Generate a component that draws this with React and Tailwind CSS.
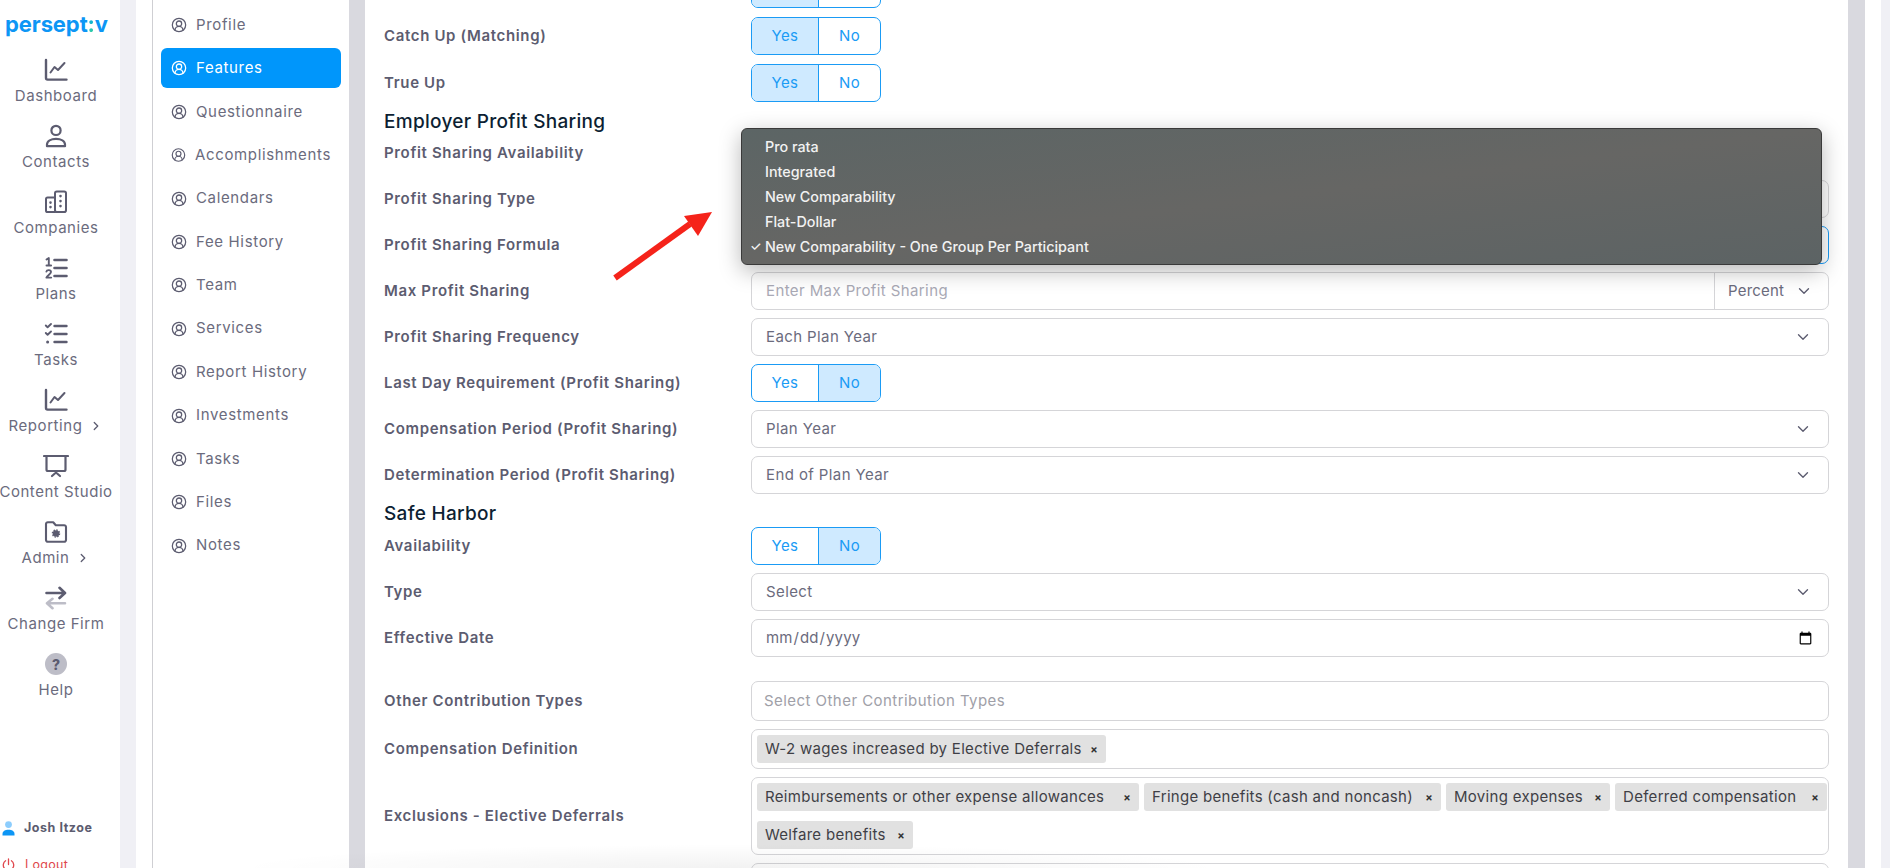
import React from "react";
import { ChevronDown, ChevronRight, CircleUserRound } from "lucide-react";

const DashIcon = () => (
  <svg width="24" height="24" viewBox="0 0 24 24" fill="none" stroke="currentColor" strokeWidth="2.4" strokeLinecap="round" strokeLinejoin="round">
    <path d="M2 2v18a1.6 1.6 0 0 0 1.6 1.6H22.5" />
    <path d="M6.5 14.5l4-5.5 3.5 3 6.5-7" strokeWidth="2" />
  </svg>
);

const ContactIcon = () => (
  <svg width="24" height="24" viewBox="0 0 24 24" fill="none" stroke="currentColor" strokeWidth="2.2" strokeLinejoin="round">
    <circle cx="12" cy="6.4" r="4.6" />
    <path d="M3 22.2v-1.6c0-3.6 4-5.8 9-5.8s9 2.2 9 5.8v1.6z" />
  </svg>
);

const CompanyIcon = () => (
  <svg width="24" height="24" viewBox="0 0 24 24" fill="none" stroke="currentColor" strokeWidth="2" strokeLinecap="round" strokeLinejoin="round">
    <path d="M11 7.5H3.6A1.6 1.6 0 0 0 2 9.1v11.3A1.6 1.6 0 0 0 3.6 22H11" />
    <rect x="11" y="1.5" width="11" height="20.5" rx="1.8" />
    <path d="M16.5 6v.1M16.5 11v.1M16.5 16v.1M6.5 12.5v.1M6.5 17v.1" strokeWidth="2.6" />
  </svg>
);

const PlansIcon = () => (
  <svg width="24" height="24" viewBox="0 0 24 24" fill="none" stroke="currentColor" strokeWidth="2.6" strokeLinecap="round" strokeLinejoin="round">
    <path d="M10.5 4h12M10.5 12h12M10.5 20h12" />
    <path d="M2.5 3.5L4.8 2v7.5M2.5 9.5h4.6" strokeWidth="1.9" />
    <path d="M2.4 15.6c.4-2 4.6-2 4.6.4 0 2-3.4 3-4.6 5.6h4.8" strokeWidth="1.9" />
  </svg>
);

const TasksIcon = () => (
  <svg width="24" height="24" viewBox="0 0 24 24" fill="none" stroke="currentColor" strokeWidth="2.4" strokeLinecap="round" strokeLinejoin="round">
    <path d="M10.5 4h12M10.5 12h12M10.5 20h12" />
    <path d="M1.8 3.5l1.8 1.8L7 2M1.8 11l1.8 1.8L7 9.5" strokeWidth="1.9" />
    <path d="M3.6 20v.1" strokeWidth="3" />
  </svg>
);

const StudioIcon = () => (
  <svg width="26" height="24" viewBox="0 0 26 24" fill="none" stroke="currentColor" strokeWidth="2.2" strokeLinecap="round" strokeLinejoin="round">
    <path d="M1 2h24" />
    <path d="M3.5 3v12.5a1.5 1.5 0 0 0 1.5 1.5h16a1.5 1.5 0 0 0 1.5-1.5V3" />
    <path d="M13 17v1.5M13 18.5l-4 3.5M13 18.5l4 3.5" />
  </svg>
);

const AdminIcon = () => (
  <svg width="24" height="24" viewBox="0 0 24 24" fill="none" stroke="currentColor" strokeWidth="2.1" strokeLinejoin="round">
    <path d="M2 4a1.8 1.8 0 0 1 1.8-1.8h5.4l2.6 3h8.4A1.8 1.8 0 0 1 22 7v13a1.8 1.8 0 0 1-1.8 1.8H3.8A1.8 1.8 0 0 1 2 20z" />
    <circle cx="12" cy="13.5" r="2.2" fill="currentColor" />
    <circle cx="12" cy="13.5" r="3.6" strokeWidth="1.3" strokeDasharray="1.5 1.3" />
  </svg>
);

const FirmIcon = () => (
  <svg width="24" height="24" viewBox="0 0 24 24" fill="none" strokeWidth="2.6" strokeLinecap="round" strokeLinejoin="round">
    <path d="M2.5 7h18M15.5 1.8L21 7l-5.5 5" stroke="#5c5c70" />
    <path d="M21 17.2H3.5M8.5 12.8L3 17.2l5.5 5" stroke="#bdbdc7" />
  </svg>
);

const mainNav = [
  { label: "Dashboard", icon: <DashIcon /> },
  { label: "Contacts", icon: <ContactIcon /> },
  { label: "Companies", icon: <CompanyIcon /> },
  { label: "Plans", icon: <PlansIcon /> },
  { label: "Tasks", icon: <TasksIcon /> },
  { label: "Reporting", icon: <DashIcon />, more: true },
  { label: "Content Studio", icon: <StudioIcon /> },
  { label: "Admin", icon: <AdminIcon />, more: true },
  { label: "Change Firm", icon: <FirmIcon /> },
  {
    label: "Help",
    icon: (
      <div className="flex h-[22px] w-[22px] items-center justify-center rounded-full bg-[#bdbdc7] text-[14px] font-extrabold text-[#5c5c70]">
        ?
      </div>
    ),
  },
];

const subNav = [
  "Profile",
  "Features",
  "Questionnaire",
  "Accomplishments",
  "Calendars",
  "Fee History",
  "Team",
  "Services",
  "Report History",
  "Investments",
  "Tasks",
  "Files",
  "Notes",
];

const popupItems = ["Pro rata", "Integrated", "New Comparability", "Flat-Dollar", "New Comparability - One Group Per Participant"];

const Sidebar = () => (
  <div className="flex h-full w-[120px] shrink-0 flex-col bg-white text-[#6b6b7d]">
    <div className="h-[58px] w-full shrink-0 pl-[5px] pt-[6px] text-[22px] leading-[36px] font-bold tracking-[-0.1px] text-[#0d96f5]">
      persept
      <span className="bg-gradient-to-b from-[#0d96f5] to-[#3fd68f] bg-clip-text text-transparent">:</span>v
    </div>
    {mainNav.map(({ label, icon, more }) => (
      <div key={label} className="flex h-[66px] w-[112px] shrink-0 flex-col items-center">
        <div className="flex h-6 items-center justify-center text-[#5c5c70]">{icon}</div>
        <div className="mt-1 flex h-5 items-center justify-center whitespace-nowrap text-[15px] leading-5 tracking-[0.55px]">
          {label}
          {more && <ChevronRight size={14} strokeWidth={2.2} className="ml-[7px] text-[#5c5c70]" />}
        </div>
      </div>
    ))}
    <div className="mt-[99px] flex h-[22px] w-full shrink-0 items-center pl-[2px]">
      <svg width="13" height="15" viewBox="0 0 13 15">
        <circle cx="6.5" cy="3.6" r="3.4" fill="#8ccdfd" />
        <path d="M0.5 14.5v-1.6c0-2.8 2.6-4.2 6-4.2s6 1.4 6 4.2v1.6z" fill="#0d96f5" />
      </svg>
      <span className="ml-[9px] text-[12.5px] font-bold tracking-[0.55px] text-[#5c5c70]">Josh Itzoe</span>
    </div>
    <div className="mt-4 flex h-5 w-full shrink-0 items-center pl-[2px] text-[12.5px] text-[#e0474c]">
      <svg width="13" height="14" viewBox="0 0 13 14" fill="none" stroke="#e0474c" strokeWidth="1.3" strokeLinecap="round">
        <path d="M6.5 1v5.5M3.6 2.8a5.2 5.2 0 1 0 5.8 0" />
      </svg>
      <span className="ml-[10px] tracking-[0.35px]">Logout</span>
    </div>
  </div>
);

const SubNav = () => (
  <div className="flex h-full w-[197px] shrink-0 flex-col gap-[3.4px] border-l border-[#cfcfd3] bg-white pl-2 pt-[5px]">
    {subNav.map((item) => (
      <div
        key={item}
        className={
          item === "Features"
            ? "flex h-10 w-[180px] shrink-0 items-center gap-[9px] rounded-md bg-[#0096fb] px-[10px] text-[15px] tracking-[0.65px] text-white"
            : "flex h-10 w-[180px] shrink-0 items-center gap-[9px] px-[10px] text-[15px] tracking-[0.65px] text-[#6b6b7d]"
        }
      >
        <CircleUserRound size={16} strokeWidth={1.9} className={item === "Features" ? "text-white" : "text-[#5c5c70]"} />
        {item}
      </div>
    ))}
  </div>
);

const Row = ({ label, h = "h-[38px]", mb = "mb-2", children }) => (
  <div className={`flex shrink-0 items-center ${h} ${mb}`}>
    <div className="w-[367px] shrink-0 text-[15px] font-semibold tracking-[0.65px] text-[#5c5c70]">{label}</div>
    <div className="h-full flex-1">{children}</div>
  </div>
);

const YesNo = ({ value, yes = "Yes", no = "No" }) => (
  <div className="flex h-full w-[130px] overflow-hidden rounded-[7px] border border-[#1a9bf5] text-[15px] tracking-[0.4px] text-[#1a9bf5]">
    <div className={value === "Yes" ? "flex w-[67px] items-center justify-center border-r border-[#1a9bf5] bg-[#cfeaff]" : "flex w-[67px] items-center justify-center border-r border-[#1a9bf5]"}>
      {yes}
    </div>
    <div className={value === "No" ? "flex flex-1 items-center justify-center bg-[#cfeaff]" : "flex flex-1 items-center justify-center"}>
      {no}
    </div>
  </div>
);

const Select = ({ value, focused }) => (
  <div
    className={
      focused
        ? "flex h-full items-center justify-between rounded-[7px] border border-[#1a9bf5] pl-[14px] pr-[16px] text-[15px] tracking-[0.4px] text-[#6b6b7d]"
        : "flex h-full items-center justify-between rounded-[7px] border border-[#d5d5d8] pl-[14px] pr-[16px] text-[15px] tracking-[0.4px] text-[#6b6b7d]"
    }
  >
    {value}
    <ChevronDown size={18} strokeWidth={1.8} className="text-[#5c5c70]" />
  </div>
);

const Chip = ({ children, w }) => (
  <div className={`flex h-[28px] items-center justify-between rounded-[3px] bg-[#e1e1e1] pl-2 pr-[8px] text-[15px] tracking-[0.3px] whitespace-nowrap text-[#3f3f46] ${w}`}>
    {children}
    <span className="text-[11px] font-bold text-[#333]">×</span>
  </div>
);

const Heading = ({ children, mb }) => (
  <div className={`flex h-6 shrink-0 items-center text-[19px] font-medium tracking-[0.3px] text-[#0d1f33] ${mb}`}>{children}</div>
);

const FeatureForm = () => (
  <div className="relative h-full flex-1 overflow-hidden bg-white pl-[19px] pr-[19px]">
    <div className="-mt-[30px] flex flex-col">
      {/* row scrolled out of view, only its bottom edge shows */}
      <Row label="" mb="mb-[9px]"><YesNo value="Yes" yes="" no="" /></Row>
      <Row label="Catch Up (Matching)" mb="mb-[9px]"><YesNo value="Yes" /></Row>
      <Row label="True Up"><YesNo value="Yes" /></Row>
      <Heading>Employer Profit Sharing</Heading>
      {/* the open popup covers these three controls */}
      <Row label="Profit Sharing Availability"><YesNo value="Yes" yes="" no="" /></Row>
      <Row label="Profit Sharing Type"><Select value="" /></Row>
      <Row label="Profit Sharing Formula"><Select value="" focused /></Row>
      <Row label="Max Profit Sharing">
        <div className="flex h-full rounded-[7px] border border-[#d5d5d8] text-[15px] tracking-[0.4px]">
          <div className="flex flex-1 items-center pl-[14px] text-[#a9a9b5]">Enter Max Profit Sharing</div>
          <div className="flex w-[114px] items-center justify-between border-l border-[#d5d5d8] pl-[13px] pr-[15px] tracking-[0.2px] text-[#6b6b7d]">
            Percent
            <ChevronDown size={18} strokeWidth={1.8} className="text-[#5c5c70]" />
          </div>
        </div>
      </Row>
      <Row label="Profit Sharing Frequency"><Select value="Each Plan Year" /></Row>
      <Row label="Last Day Requirement (Profit Sharing)"><YesNo value="No" /></Row>
      <Row label="Compensation Period (Profit Sharing)"><Select value="Plan Year" /></Row>
      <Row label="Determination Period (Profit Sharing)"><Select value="End of Plan Year" /></Row>
      <Heading mb="mb-px">Safe Harbor</Heading>
      <Row label="Availability"><YesNo value="No" /></Row>
      <Row label="Type"><Select value="Select" /></Row>
      <Row label="Effective Date" mb="mb-6">
        <input
          type="date"
          className="h-full w-full rounded-[7px] border border-[#d5d5d8] pl-[13px] pr-[13px] text-[15px] tracking-[0.1px] text-[#6b6b7d] outline-none"
        />
      </Row>
      <Row label="Other Contribution Types" h="h-10">
        <div className="flex h-full items-center rounded-[7px] border border-[#d5d5d8] pl-[12px] text-[15px] tracking-[0.45px] text-[#a0a0a8]">
          Select Other Contribution Types
        </div>
      </Row>
      <Row label="Compensation Definition" h="h-10">
        <div className="flex h-full items-center rounded-[7px] border border-[#d5d5d8] pl-[5px]">
          <Chip w="w-[349px]">W-2 wages increased by Elective Deferrals</Chip>
        </div>
      </Row>
      <Row label="Exclusions - Elective Deferrals" h="h-[78px]">
        <div className="flex h-full flex-wrap content-start gap-x-[5px] gap-y-[10px] rounded-[7px] border border-[#d5d5d8] pl-[5px] pt-[5px]">
          <Chip w="w-[382px]">Reimbursements or other expense allowances</Chip>
          <Chip w="w-[297px]">Fringe benefits (cash and noncash)</Chip>
          <Chip w="w-[164px]">Moving expenses</Chip>
          <Chip w="w-[212px]">Deferred compensation</Chip>
          <Chip w="w-[156px]">Welfare benefits</Chip>
        </div>
      </Row>
      <Row label="" h="h-10">
        <div className="h-full rounded-[7px] border border-[#d5d5d8]" />
      </Row>
    </div>

    {/* native select popup, sits over the form */}
    <div className="absolute left-[376px] top-[128px] flex h-[137px] w-[1081px] flex-col rounded-md border border-[#3a3a3a] bg-gradient-to-tl from-[#5c6364] via-[#666664] to-[#5c6565] pt-[5px] text-[14.35px] font-medium text-[#f2f2f2] shadow-[0_6px_22px_rgba(0,0,0,0.28)]">
      {popupItems.map((item, i) => (
        <div key={item} className="relative flex h-[25px] items-center pl-[23px]">
          {i === 4 && <span className="absolute left-[8px] text-[13px]">✓</span>}
          {item}
        </div>
      ))}
    </div>

    {/* annotation arrow */}
    <svg className="absolute left-[247px] top-[205px]" width="105" height="80" viewBox="0 0 105 80" fill="none">
      <path d="M3 73L78 19" stroke="#f5231a" strokeWidth="6" />
      <path d="M100 7L72 11L86 31z" fill="#f5231a" />
    </svg>
  </div>
);

export default function App() {
  return (
    <div className="relative flex h-screen w-full overflow-hidden bg-white font-['Inter',sans-serif]">
      <Sidebar />
      <div className="h-full w-4 shrink-0 bg-[#f0f0f5]" />
      <div className="h-full w-4 shrink-0 bg-white" />
      <SubNav />
      <div className="h-full w-4 shrink-0 bg-[#d9d9df]" />
      <FeatureForm />
      <div className="h-full w-[17px] shrink-0 bg-[#d9d9df]" />
      <div className="h-full w-4 shrink-0 bg-white" />
      <div className="h-full w-[9px] shrink-0 bg-[#f0f0f5]" />
      <div className="pointer-events-none absolute bottom-0 left-[230px] h-[24px] w-[1000px] bg-[radial-gradient(ellipse_at_bottom,rgba(0,0,0,0.05),transparent_70%)]" />
    </div>
  );
}
